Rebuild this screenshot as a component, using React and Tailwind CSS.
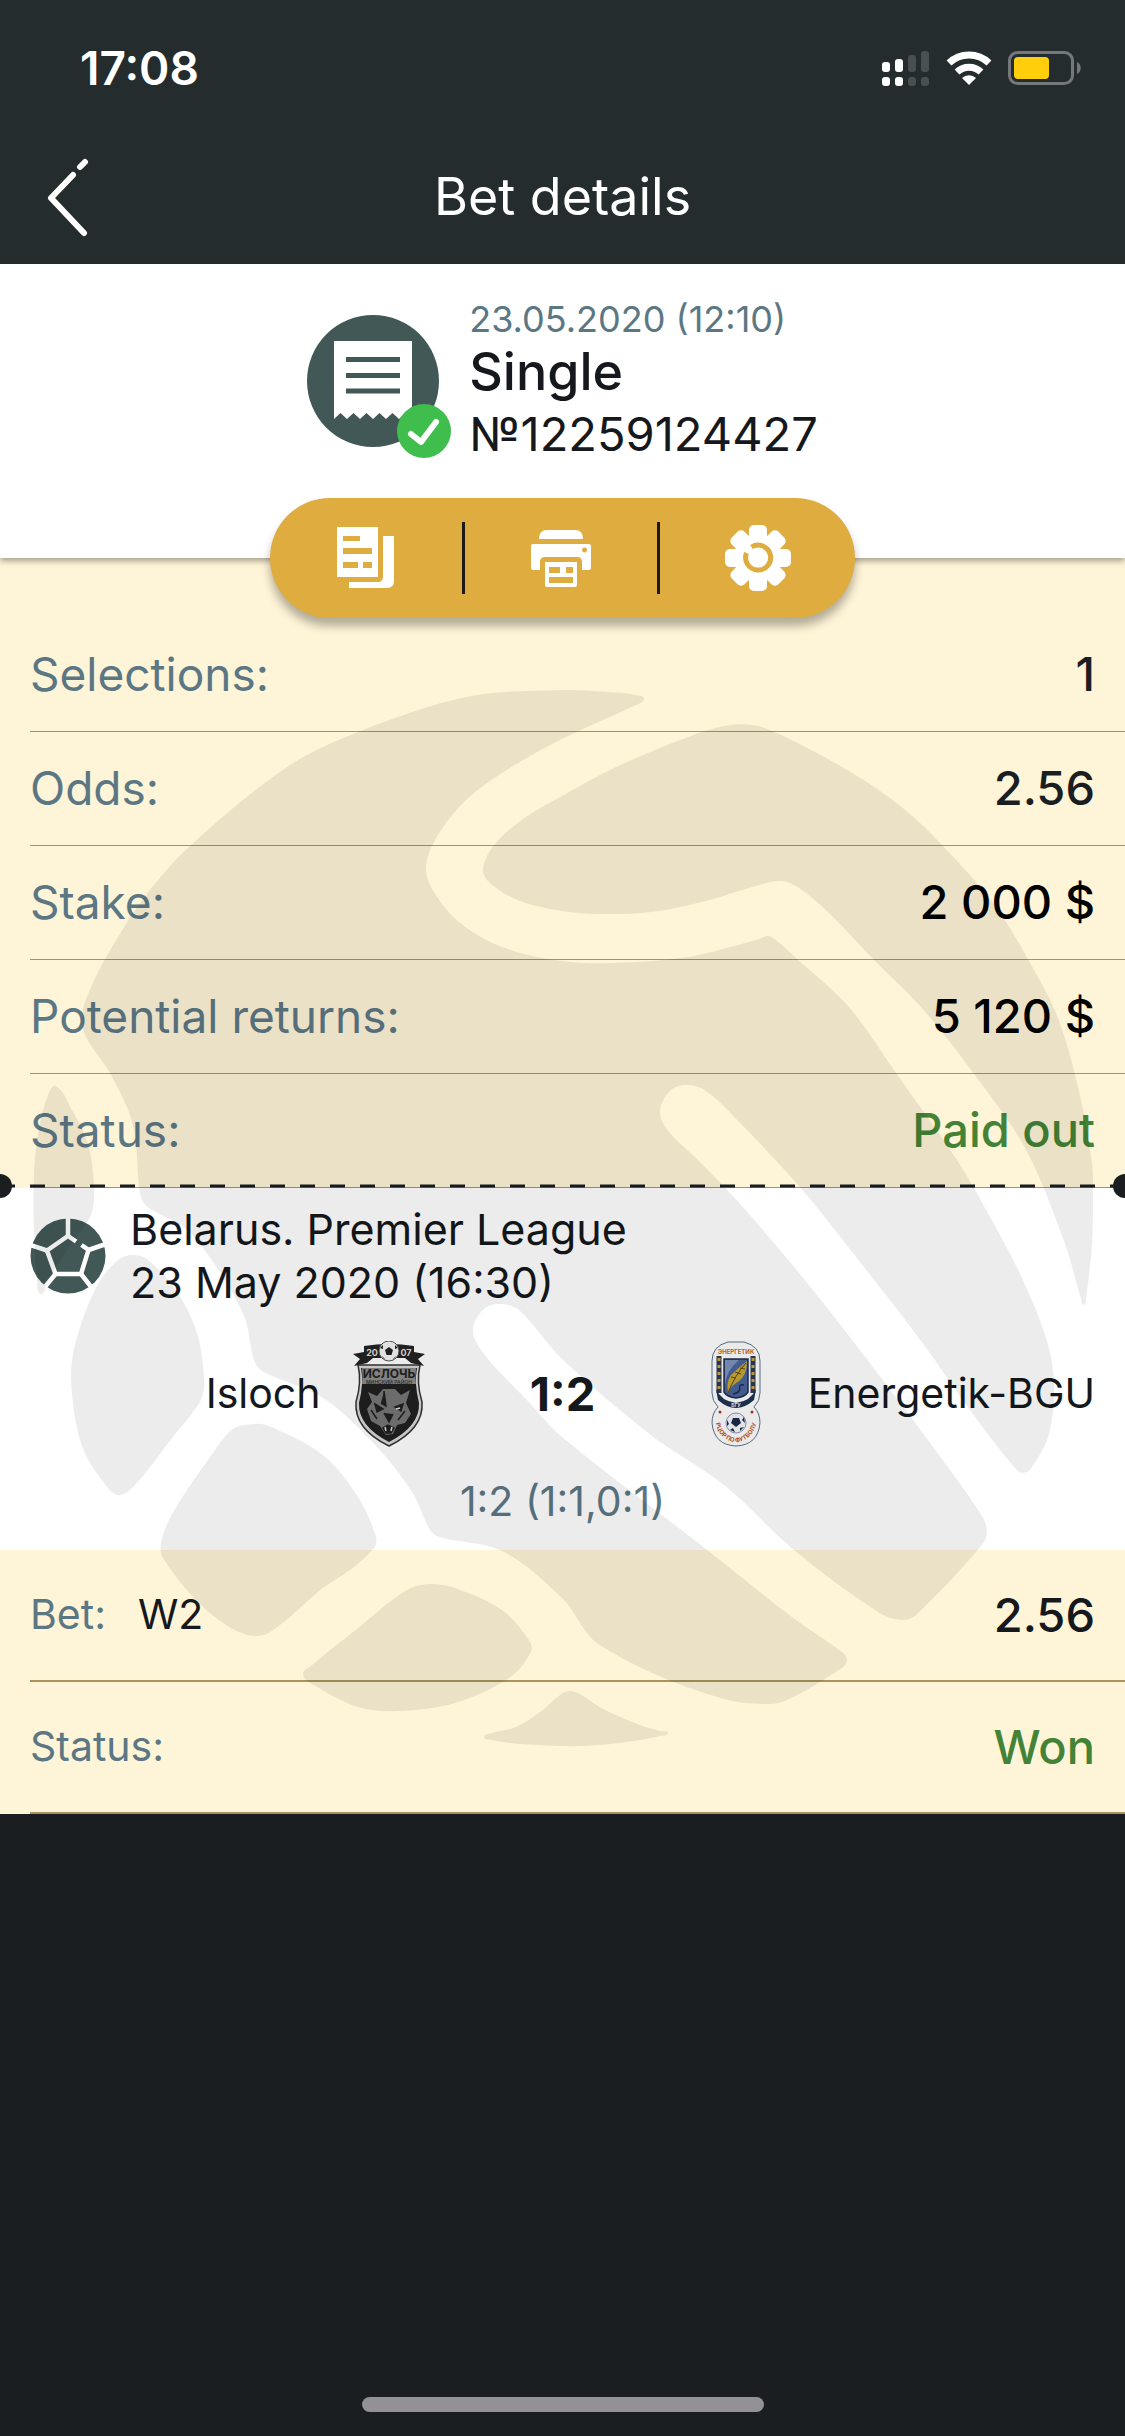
import React from "react";

const summary = [
  { label: "Selections:", value: "1", color: "text-[#1b1e21]" },
  { label: "Odds:", value: "2.56", color: "text-[#1b1e21]" },
  { label: "Stake:", value: "2 000 $", color: "text-black" },
  { label: "Potential returns:", value: "5 120 $", color: "text-black" },
  { label: "Status:", value: "Paid out", color: "text-[#448336]" },
];

// Outline points of the ball panels behind the ticket
const panels = [
  [[644, 699], [636, 695], [610, 692], [562, 690], [466, 697], [358, 732], [287, 767], [190, 846], [143, 899], [104, 961], [86, 999], [82, 1018], [86, 1037], [111, 1075], [133, 1125], [139, 1186], [142, 1200], [149, 1208], [186, 1229], [215, 1265], [244, 1316], [254, 1360], [262, 1371], [323, 1398], [376, 1446], [412, 1492], [430, 1530], [439, 1537], [502, 1551], [562, 1598], [587, 1633], [598, 1644], [652, 1673], [724, 1699], [763, 1704], [785, 1701], [842, 1668], [847, 1660], [842, 1652], [792, 1617], [706, 1549], [562, 1437], [527, 1400], [484, 1354], [473, 1330], [484, 1309], [502, 1304], [520, 1311], [562, 1359], [652, 1436], [724, 1485], [795, 1551], [878, 1612], [901, 1620], [916, 1615], [982, 1545], [987, 1532], [982, 1516], [939, 1455], [885, 1383], [813, 1290], [742, 1206], [698, 1160], [670, 1133], [660, 1112], [670, 1091], [686, 1085], [706, 1091], [742, 1125], [799, 1186], [849, 1248], [921, 1341], [975, 1417], [1014, 1467], [1023, 1473], [1032, 1467], [1049, 1434], [1054, 1383], [1047, 1341], [1022, 1278], [989, 1215], [957, 1160], [896, 1073], [849, 1007], [795, 957], [777, 941], [768, 936], [756, 940], [688, 957], [612, 963], [562, 961], [502, 947], [459, 922], [434, 892], [426, 869], [434, 842], [462, 804], [502, 773], [562, 739], [634, 706]],
  [[562, 796], [616, 767], [688, 737], [724, 726], [752, 725], [777, 733], [849, 771], [903, 808], [943, 846], [993, 903], [1029, 961], [1058, 1018], [1079, 1091], [1092, 1163], [1093, 1186], [1092, 1244], [1086, 1299], [1084, 1305], [1081, 1299], [1065, 1244], [1025, 1148], [968, 1066], [921, 1007], [874, 960], [831, 915], [799, 888], [781, 881], [756, 886], [706, 901], [652, 912], [598, 914], [562, 911], [520, 901], [491, 884], [483, 869], [495, 844], [523, 819]],
  [[56, 1086], [72, 1110], [88, 1144], [94, 1186], [91, 1215], [70, 1245], [47, 1282], [41, 1294], [37, 1280], [34, 1232], [34, 1175], [38, 1133], [48, 1095]],
  [[133, 1255], [147, 1259], [176, 1290], [197, 1333], [204, 1379], [201, 1400], [172, 1438], [136, 1484], [120, 1495], [108, 1488], [82, 1446], [71, 1379], [77, 1337], [97, 1286], [118, 1260]],
  [[253, 1424], [269, 1426], [323, 1455], [358, 1497], [376, 1537], [374, 1548], [350, 1570], [323, 1588], [272, 1631], [253, 1636], [226, 1625], [194, 1598], [163, 1558], [161, 1543], [172, 1514], [215, 1450], [233, 1429]],
  [[428, 1584], [455, 1588], [502, 1610], [529, 1640], [531, 1652], [509, 1678], [455, 1703], [398, 1711], [358, 1707], [312, 1684], [303, 1674], [312, 1665], [358, 1628], [405, 1591]],
  [[484, 1737], [492, 1733], [516, 1727], [540, 1712], [560, 1695], [569, 1691], [580, 1694], [598, 1706], [616, 1715], [640, 1725], [660, 1731], [668, 1733], [660, 1736], [634, 1741], [584, 1746], [520, 1744], [492, 1740]],
];

function smoothPath(points) {
  const n = points.length;
  let d = `M${points[0].join(" ")}`;
  for (let i = 0; i < n; i++) {
    const a = points[(i - 1 + n) % n];
    const b = points[i];
    const c = points[(i + 1) % n];
    const e = points[(i + 2) % n];
    // keep the handles shorter than the segment, so uneven points don't overshoot
    const len = Math.hypot(c[0] - b[0], c[1] - b[1]);
    const t1 = len / (Math.hypot(c[0] - a[0], c[1] - a[1]) || 1) / 3;
    const t2 = len / (Math.hypot(e[0] - b[0], e[1] - b[1]) || 1) / 3;
    d += `C${b[0] + (c[0] - a[0]) * t1} ${b[1] + (c[1] - a[1]) * t1} ${
      c[0] - (e[0] - b[0]) * t2
    } ${c[1] - (e[1] - b[1]) * t2} ${c[0]} ${c[1]}`;
  }
  return d + "Z";
}

function BallWatermark() {
  return (
    <svg
      className="pointer-events-none absolute inset-x-0 top-0 w-full"
      viewBox="0 558 1125 1256"
      aria-hidden="true"
    >
      {panels.map((points, index) => (
        <path key={index} d={smoothPath(points)} fill="#000" fillOpacity="0.075" />
      ))}
    </svg>
  );
}

function StatusBar() {
  return (
    <div className="flex h-[138px] items-center justify-between pr-11 pb-0.5 pl-20">
      <span className="text-[46px] font-semibold">17:08</span>
      <div className="flex items-center gap-4">
        <svg className="h-9 w-12" viewBox="0 0 48 36" aria-hidden="true">
          <g fill="#fff">
            <rect x="0" y="12" width="8" height="10" rx="3" />
            <rect x="13" y="9" width="8" height="13" rx="3" />
            <rect x="0" y="27" width="8" height="9" rx="3" />
            <rect x="13" y="27" width="8" height="9" rx="3" />
          </g>
          <g fill="#4a4f51">
            <rect x="26" y="5" width="8" height="17" rx="3" />
            <rect x="39" y="1" width="8" height="21" rx="3" />
            <rect x="26" y="27" width="8" height="9" rx="3" />
            <rect x="39" y="27" width="8" height="9" rx="3" />
          </g>
        </svg>
        <svg className="h-[34px] w-[46px]" viewBox="0 0 46 34" aria-hidden="true">
          <g fill="none" stroke="#fff" strokeWidth="7">
            <path d="M3 12 A29 29 0 0 1 43 12" />
            <path d="M11 21 A17.500 17.500 0 0 1 35 21" />
          </g>
          <path d="M23 34 L16 27 A10 10 0 0 1 30 27 Z" fill="#fff" />
        </svg>
        <svg className="h-[34px] w-[73px]" viewBox="0 0 73 34" aria-hidden="true">
          <rect x="1.500" y="1.500" width="63" height="31" rx="8" fill="none" stroke="#74787a" strokeWidth="3" />
          <rect x="6" y="6" width="35" height="22" rx="4" fill="#ffcf0c" />
          <path d="M69 11 C74 13 74 21 69 23 Z" fill="#74787a" />
        </svg>
      </div>
    </div>
  );
}

function ReceiptIcon() {
  return (
    <svg className="h-[152px] w-[146px]" viewBox="0 0 146 152" aria-hidden="true">
      <circle cx="66" cy="74" r="66" fill="#415857" />
      <path
        d="M27 34 H105 V112 L98.500 106 L92 112 L85.500 106 L79 112 L72.500 106 L66 112 L59.500 106 L53 112 L46.500 106 L40 112 L33.500 106 L27 112 Z"
        fill="#fff"
      />
      <path d="M39 52.500 H93 M39 68.500 H93 M39 84 H93" stroke="#415857" strokeWidth="5" />
      <circle cx="117" cy="124" r="27" fill="#3fbd4d" />
      <path
        d="M104 127 L114 135 L129 115"
        fill="none"
        stroke="#fff"
        strokeWidth="6"
        strokeLinecap="round"
        strokeLinejoin="round"
      />
    </svg>
  );
}

function CopyIcon() {
  return (
    <svg className="h-[62px] w-[58px]" viewBox="0 0 58 62" aria-hidden="true">
      <path
        fillRule="evenodd"
        d="M0 0 H41 V50 H0 Z M6 9 V14 H23 V9 Z M6 21 V27 H35 V21 Z M6 35 V41 H21 V35 Z M26 35 V41 H35 V35 Z"
        fill="#fff"
      />
      <path d="M46 9 H57 V54 Q57 61 50 61 H12 V55 H41 Q46 55 46 49 Z" fill="#fff" />
    </svg>
  );
}

function PrintIcon() {
  return (
    <svg className="h-[58px] w-[60px]" viewBox="0 0 60 58" aria-hidden="true">
      <path d="M8 10 Q8 1 16 1 H44 Q52 1 52 10 Z" fill="#fff" />
      <path
        fillRule="evenodd"
        d="M2 15 H58 Q60 15 60 17 V39 Q60 41 58 41 H51 V33 Q51 28 46 28 H14 Q9 28 9 33 V41 H2 Q0 41 0 39 V17 Q0 15 2 15 Z M53.500 18.500 A2.500 2.500 0 1 0 53.600 18.500 Z"
        fill="#fff"
      />
      <path
        fillRule="evenodd"
        d="M14 33 H46 V56 Q46 58 44 58 H16 Q14 58 14 56 Z M18 38 V44 H29 V38 Z M35 38 V44 H42 V38 Z M18 48 V54 H42 V48 Z"
        fill="#fff"
      />
    </svg>
  );
}

function GearIcon() {
  return (
    <svg className="h-[66px] w-[66px]" viewBox="-33 -33 66 66" aria-hidden="true">
      {[0, 45, 90, 135].map((angle) => (
        <rect key={angle} x="-9" y="-33" width="18" height="66" rx="5" fill="#fff" transform={`rotate(${angle})`} />
      ))}
      <circle r="24" fill="#fff" />
      <path
        d="M-6.500 -11 A12.500 12.500 0 1 1 -11.500 -5"
        fill="none"
        stroke="#deac3f"
        strokeWidth="5"
      />
    </svg>
  );
}

function FootballIcon() {
  return (
    <svg className="h-[76px] w-[76px] shrink-0" viewBox="0 0 76 76" aria-hidden="true">
      <circle cx="38" cy="38" r="37.500" fill="#415857" />
      <g fill="none" stroke="#fff" strokeWidth="4.500">
        <path d="M46 23.500 L38 18 L17 32.500 L25.500 56 H51 L58.500 32 L51.500 27" />
        <path d="M38 18 V0 M17 32.500 L0 27 M25.500 56 L14 70 M51 56 L62 70 M58.500 32 L76 26" />
      </g>
    </svg>
  );
}

function IslochCrest() {
  return (
    <svg className="h-[106px] w-[72px]" viewBox="0 0 72 106" aria-hidden="true">
      <path d="M0 13 L11 11 V5 Q36 1 61 5 V11 L72 13 L65 18 L71 25 L58 22 L52 17 H20 L14 22 L1 25 L7 18 Z" fill="#232323" />
      <path d="M5 24 H67 Q63 41 69 61 Q71 88 36 105 Q1 88 3 61 Q9 41 5 24 Z" fill="#d5d5d5" stroke="#333" strokeWidth="1.500" />
      <path d="M8 27 H64 Q61 42 66 62 Q67 85 36 101 Q5 85 6 62 Q11 42 8 27 Z" fill="#202020" />
      <path d="M9 27 H63 Q62 36 63 43 H9 Q10 35 9 27 Z" fill="#8b8b8b" />
      <text x="36" y="37" textAnchor="middle" fontSize="12" fontWeight="700" fill="#222">ИСЛОЧЬ</text>
      <text x="36" y="43" textAnchor="middle" fontSize="5" fontWeight="600" fill="#333">МИНСКИЙ РАЙОН</text>
      <path
        d="M15 51 L24 55 L30 48 H42 L48 54 L57 49 L53 62 L58 73 L52 82 L44 84 L40 93 L33 94 L27 85 L18 80 L14 68 L19 61 Z"
        fill="#757575"
      />
      <path
        d="M31 50 L33 65 L28 62 M22 63 L30 68 L24 71 Z M42 66 L50 63 L48 70 Z M31 72 L36 81 L40 73 M30 87 L35 84 L41 87 L38 92 L33 92 Z M18 69 L24 78 M52 70 L45 79"
        fill="#202020"
        stroke="#202020"
        strokeWidth="1.500"
      />
      <path d="M43 68 L47 67 M32 86 L33 90 M39 86 L38 90" stroke="#ddd" strokeWidth="1.500" />
      <text x="19" y="15" textAnchor="middle" fontSize="9" fontWeight="700" fill="#ddd">20</text>
      <text x="53" y="15" textAnchor="middle" fontSize="9" fontWeight="700" fill="#ddd">07</text>
      <circle cx="36" cy="10" r="10" fill="#f4f4f4" stroke="#555" strokeWidth="1" />
      <path d="M36 6 L40 9 L38.500 14 H33.500 L32 9 Z M27 7 L30 4 L30 8 Z M45 7 L42 4 L42 8 Z M30 17 L33 19 L29 15 Z M42 17 L39 19 L43 15 Z" fill="#222" />
    </svg>
  );
}

function EnergetikCrest() {
  return (
    <svg className="h-[106px] w-[50px]" viewBox="0 0 50 106" aria-hidden="true">
      <path
        d="M17 1 H33 Q49 5 49 20 V52 Q49 60 43 66 Q49 72 49 82 Q47 104 25 105 Q3 104 1 82 Q1 72 7 66 Q1 60 1 52 V20 Q1 5 17 1 Z"
        fill="#fdfdfd"
        stroke="#5d7489"
        strokeWidth="1"
      />
      <text x="25" y="13" textAnchor="middle" fontSize="6" fontWeight="700" fill="#c06a2c">ЭНЕРГЕТИК</text>
      <path d="M8 15 V52 M42 15 V52" stroke="#2d3a52" strokeWidth="5" />
      <path d="M8 17 V52 M42 17 V52" stroke="#c9a548" strokeWidth="3" strokeDasharray="3 4" />
      <path d="M5 48 Q10 60 25 62 Q40 60 45 48 L43 59 Q34 67 25 67 Q16 67 7 59 Z" fill="#1e3253" />
      <path d="M13 18 H37 V51 Q34 56 25 57 Q16 56 13 51 Z" fill="#4a639b" stroke="#1d2e4c" strokeWidth="1.500" />
      <path d="M14 19 H28 Q15 30 14 44 Z" fill="#7d91bb" />
      <path d="M36 20 Q36 34 28 40 Q21 44 17 51 Q15 41 20 34 Q27 27 36 20 Z" fill="#c6a631" />
      <path d="M35 22 Q24 34 17 52 M20 36 L25 37 M24 31 L30 33 M29 27 L34 28" fill="none" stroke="#574b1b" strokeWidth="1" />
      <path d="M22 53 Q28 52 29 48 Q27 43 33 44" fill="none" stroke="#1d2e4c" strokeWidth="1.500" />
      <text x="25" y="66" textAnchor="middle" fontSize="5" fontWeight="700" fill="#e8e8e8">БГУ</text>
      <circle cx="9" cy="71" r="1.500" fill="#b3322b" />
      <circle cx="41" cy="71" r="1.500" fill="#b3322b" />
      <circle cx="25" cy="82" r="10" fill="#f3f5f8" stroke="#8b9ab0" strokeWidth="1" />
      <path d="M22 77 L28 77 L30 82 L25 86 L20 82 Z M16 79 L18 83 L16 85 Z M33 76 L34 82 L31 79 Z M19 89 L24 91 L22 87 Z M29 90 L33 86 L29 87 Z" fill="#1c2b4a" />
      <path id="crest-arc" d="M4 76 A21 25 0 0 0 46 76" fill="none" />
      <text fontSize="6" fontWeight="700" fill="#c2541f">
        <textPath href="#crest-arc" startOffset="50%" textAnchor="middle">РЦОР ПО ФУТБОЛУ</textPath>
      </text>
    </svg>
  );
}

export default function App() {
  return (
    <div className="flex min-h-screen flex-col bg-[#1b1e21] font-['Inter','Liberation_Sans',sans-serif] text-[#15181c]">
      <header className="bg-[#252c2e] text-white">
        <StatusBar />
        <div className="grid h-[126px] grid-cols-[120px_1fr_120px] items-center pb-2">
          <button type="button" aria-label="Back" className="flex h-full items-center pl-[46px]">
            <svg className="h-20 w-11" viewBox="0 0 44 80" aria-hidden="true">
              <path
                d="M27 18 L5 41 L38 76 M34 10 L39 5"
                fill="none"
                stroke="#fff"
                strokeWidth="6"
                strokeLinecap="round"
                strokeLinejoin="round"
              />
            </svg>
          </button>
          <h1 className="text-center text-[52px]">Bet details</h1>
        </div>
      </header>

      {/* Ticket head */}
      <section className="relative z-10 flex h-[294px] flex-col justify-between bg-white shadow-[0_3px_6px_rgba(0,0,0,0.35)]">
        <div className="flex justify-center gap-4 pt-[34px]">
          <div className="pt-[9px]">
            <ReceiptIcon />
          </div>
          <div>
            <p className="text-[36px] leading-[42px] text-[#5c7784]">23.05.2020 (12:10)</p>
            <p className="text-[52px] leading-[64px] font-medium">Single</p>
            <p className="text-[47px] leading-[60px]">№12259124427</p>
          </div>
        </div>
        <div className="-mb-[60px] flex h-[120px] shrink-0 items-center divide-x-3 divide-[#1b1a12] self-center rounded-full bg-[#deac3f] shadow-[0_8px_10px_rgba(0,0,0,0.3)]">
          <button type="button" aria-label="Copy" className="flex h-[72px] w-[195px] items-center justify-center">
            <CopyIcon />
          </button>
          <button type="button" aria-label="Print" className="flex h-[72px] w-[195px] items-center justify-center">
            <PrintIcon />
          </button>
          <button type="button" aria-label="Settings" className="flex h-[72px] w-[195px] items-center justify-center">
            <GearIcon />
          </button>
        </div>
      </section>

      {/* Ticket body */}
      <main className="relative overflow-hidden bg-[#fef4d7]">
        <dl className="pt-[60px] pl-[30px] text-[46px]">
          {summary.map((row) => (
            <div key={row.label} className="flex h-[114px] items-center justify-between border-b border-[#a8945a] pr-[30px]">
              <dt className="text-[#5c7784]">{row.label}</dt>
              <dd className={`text-[47px] font-medium ${row.color}`}>{row.value}</dd>
            </div>
          ))}
        </dl>

        <section className="relative bg-white px-[30px] pt-[15px] pb-[19px]">
          {/* Perforation */}
          <svg className="absolute inset-x-0 -top-[14px] h-6 w-full" aria-hidden="true">
            <line x1="0" y1="12" x2="100%" y2="12" stroke="#1b1e21" strokeWidth="3" strokeDasharray="15 15" />
            <circle cx="0" cy="12" r="12" fill="#1b1e21" />
            <circle cx="100%" cy="12" r="12" fill="#1b1e21" />
          </svg>
          <div className="flex gap-6">
            <div className="pt-[15px]">
              <FootballIcon />
            </div>
            <div className="text-[43px] leading-[53px]">
              <p>Belarus. Premier League</p>
              <p>23 May 2020 (16:30)</p>
            </div>
          </div>
          <div className="mt-8 grid grid-cols-[1fr_152px_1fr] items-center text-[41px]">
            <div className="flex items-center justify-end gap-8 pr-[62px]">
              <span>Isloch</span>
              <IslochCrest />
            </div>
            <strong className="text-center text-[47px]">1:2</strong>
            <div className="flex items-center justify-between pl-[72px]">
              <EnergetikCrest />
              <span>Energetik-BGU</span>
            </div>
          </div>
          <p className="mt-6 text-center text-[41px] leading-[60px] text-[#5c7784]">1:2 (1:1,0:1)</p>
        </section>

        <dl className="pl-[30px] text-[41px]">
          <div className="flex h-[132px] items-center border-b-2 border-[#a8945a] pr-[30px]">
            <dt className="text-[#5c7784]">Bet:</dt>
            <dd className="pl-8">W2</dd>
            <dd className="ml-auto text-[47px] font-medium">2.56</dd>
          </div>
          <div className="flex h-[132px] items-center border-b-2 border-[#a8945a] pr-[30px]">
            <dt className="text-[#5c7784]">Status:</dt>
            <dd className="ml-auto text-[47px] font-medium text-[#448336]">Won</dd>
          </div>
        </dl>
        <BallWatermark />
      </main>

      {/* Home indicator */}
      <div className="mt-auto mb-6 h-[15px] w-[402px] self-center rounded-full bg-[#949196]" />
    </div>
  );
}
